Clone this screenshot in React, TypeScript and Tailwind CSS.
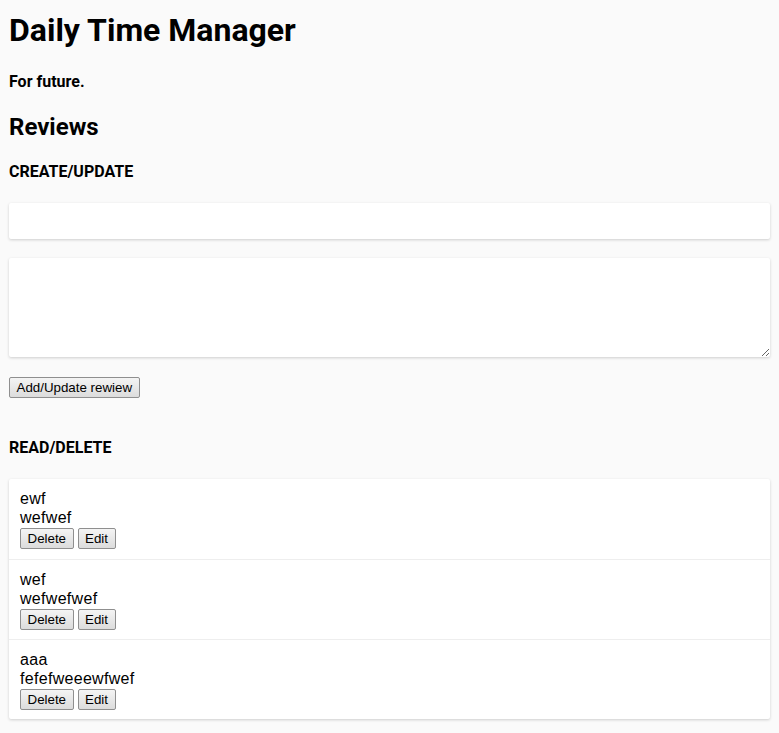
import React from "react";

type Review = { title: string; body: string };

const reviews: Review[] = [
  { title: "ewf", body: "wefwef" },
  { title: "wef", body: "wefwefwef" },
  { title: "aaa", body: "fefefweeewfwef" },
];

function OldButton({ children }: { children: React.ReactNode }) {
  return (
    <button className="h-[21px] px-[6.5px] border border-[#8f8f8f] rounded-[2px] bg-gradient-to-b from-[#f4f4f4] to-[#dcdcdc] text-[13.33px] leading-none tracking-normal text-black font-['Liberation_Sans',Arial,sans-serif] hover:from-[#e8f3fc] hover:to-[#cde6f7]">
      {children}
    </button>
  );
}

export default function App() {
  return (
    <div className="min-h-[733px] bg-[#fafafa] px-[9px] pt-[10px] text-black font-['Roboto',sans-serif]">
      <h1 className="text-[32px] font-bold leading-[40px]">Daily Time Manager</h1>
      <p className="mt-[22px] text-[16px] font-bold leading-[20px]">For future.</p>

      <h2 className="mt-[19px] text-[24px] font-bold leading-[32px]">Reviews</h2>
      <h4 className="mt-[19px] text-[16px] font-bold leading-[20px]">CREATE/UPDATE</h4>

      <form className="mt-[21px]">
        <input
          type="text"
          className="block w-full h-[36px] bg-white rounded-[2px] px-3 text-base shadow-[0_1px_3px_rgba(0,0,0,0.18)] outline-none"
        />
        <textarea className="block w-full h-[99px] mt-[19px] bg-white rounded-[2px] p-3 text-base shadow-[0_1px_3px_rgba(0,0,0,0.18)] outline-none" />
        <div className="mt-[18px]">
          <OldButton>Add/Update rewiew</OldButton>
        </div>
      </form>

      <h4 className="mt-[39px] text-[16px] font-bold leading-[20px]">READ/DELETE</h4>

      <ul className="mt-[21px] bg-white rounded-[2px] shadow-[0_1px_3px_rgba(0,0,0,0.18)] font-['Liberation_Sans',Arial,sans-serif] text-base">
        {reviews.map((r, i) => (
          <li
            key={i}
            className={
              "h-[80px] px-[11px] pt-[10px] " + (i > 0 ? "border-t border-[#eeeeee]" : "")
            }
          >
            <div className="leading-[19px] tracking-[0.3px]">{r.title}</div>
            <div className="leading-[19px] tracking-[0.3px]">{r.body}</div>
            <div className="mt-[1px] flex gap-[4px]">
              <OldButton>Delete</OldButton>
              <OldButton>Edit</OldButton>
            </div>
          </li>
        ))}
      </ul>
    </div>
  );
}
